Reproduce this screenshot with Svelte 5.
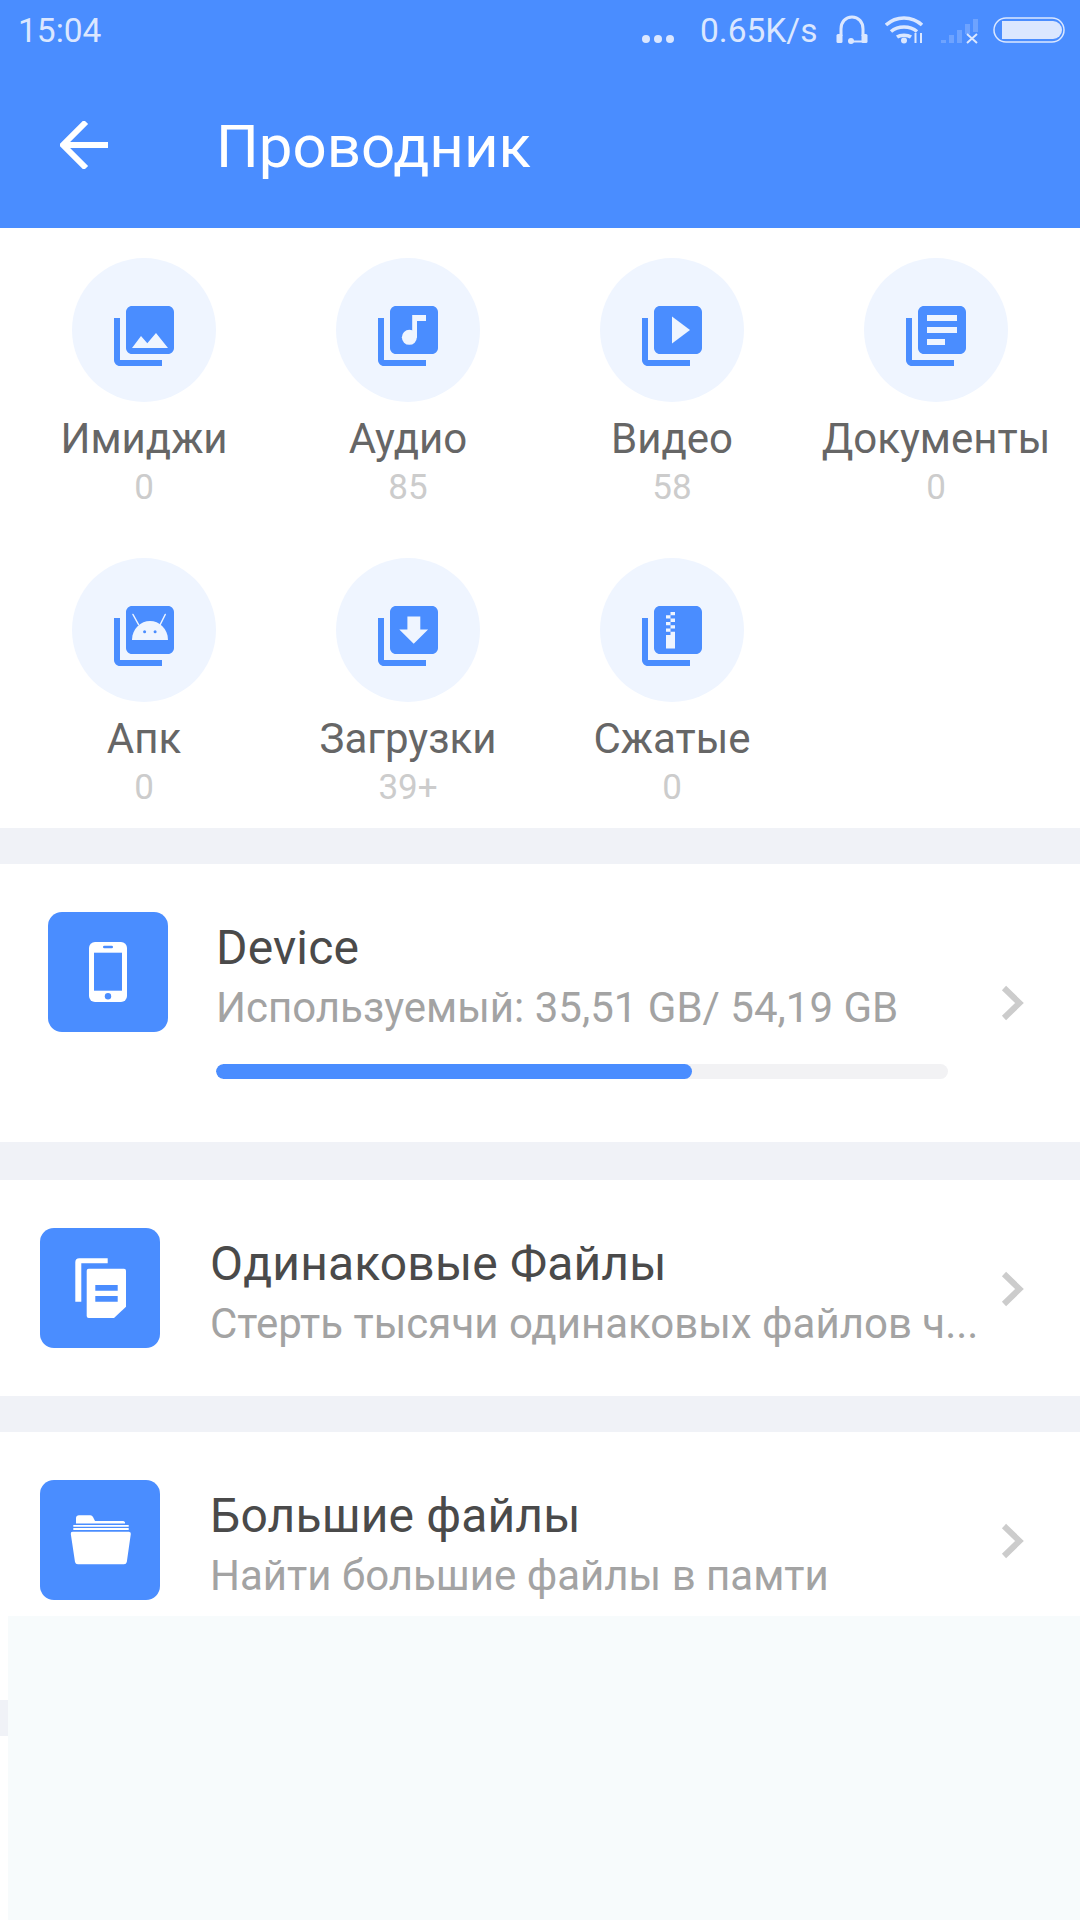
<script>
	const stack = "M22 16V4c0-1.1-.9-2-2-2H8c-1.1 0-2 .9-2 2v12c0 1.1.9 2 2 2h12c1.1 0 2-.9 2-2zM2 6v14c0 1.1.9 2 2 2h14v-2H4V6H2z";

	const categories = [
		{ label: "Имиджи", count: "0", kind: "image" },
		{ label: "Аудио", count: "85", kind: "audio" },
		{ label: "Видео", count: "58", kind: "video" },
		{ label: "Документы", count: "0", kind: "doc" },
		{ label: "Апк", count: "0", kind: "apk" },
		{ label: "Загрузки", count: "39+", kind: "download" },
		{ label: "Сжатые", count: "0", kind: "zip" }
	];
</script>

<div class="page">
	<header class="top">
		<div class="status">
			<span class="time">15:04</span>
			<div class="status-right">
				<svg class="dots" width="34" height="10" viewBox="0 0 34 10" fill="#dbe7ff">
					<circle cx="5" cy="5" r="4" /><circle cx="17" cy="5" r="4" /><circle cx="29" cy="5" r="4" />
				</svg>
				<span class="speed">0.65K/s</span>
				<svg class="headset" width="32" height="30" viewBox="0 0 32 30" fill="none">
					<path d="M5 21V14C5 7 9.500 2 16 2S27 7 27 14V21" stroke="#dbe7ff" stroke-width="3" />
					<rect x="0.500" y="19" width="6" height="9" rx="1.500" fill="#dbe7ff" />
					<rect x="25.500" y="19" width="6" height="9" rx="1.500" fill="#dbe7ff" />
					<circle cx="15" cy="26" r="3" fill="#dbe7ff" />
					<path d="M15 26.500H27" stroke="#dbe7ff" stroke-width="2" />
				</svg>
				<svg class="wifi" width="40" height="28" viewBox="0 0 40 28" fill="none" stroke="#dbe7ff" stroke-width="3.500">
					<path d="M1 9C11 -0.500 27 -0.500 37 9" />
					<path d="M6 15.500C13 9.500 25 9.500 32 15.500" />
					<path d="M12 21C15.500 18.500 22.500 18.500 26 21" />
					<circle cx="19" cy="24.500" r="3" fill="#dbe7ff" stroke="none" />
					<path d="M30.500 17V27M36 17V27" stroke-width="2" />
				</svg>
				<svg class="signal" width="38" height="26" viewBox="0 0 38 26">
					<g fill="#dbe7ff" opacity="0.25">
						<rect x="0" y="22" width="5" height="3" />
						<rect x="8" y="17" width="5" height="8" />
						<rect x="16" y="12" width="5" height="13" />
						<rect x="24" y="6" width="5" height="10" />
						<rect x="32" y="1" width="5" height="13" />
					</g>
					<path d="M26 16L36 25M36 16L26 25" stroke="#dbe7ff" stroke-width="2" />
				</svg>
				<svg class="battery" width="72" height="26" viewBox="0 0 72 26">
					<rect x="1" y="1" width="70" height="24" rx="12" fill="none" stroke="#dbe7ff" stroke-width="1.500" />
					<path d="M9 4H60A9 9 0 0 1 69 13A9 9 0 0 1 60 22H9Z" fill="#dbe7ff" />
				</svg>
			</div>
		</div>
		<div class="toolbar">
			<svg class="back" width="48" height="48" viewBox="0 0 48 48" fill="none" stroke="#fff" stroke-width="6">
				<path d="M2 24H48M26 1L3 24L26 47" />
			</svg>
			<h1>Проводник</h1>
		</div>
	</header>

	<section class="grid">
		{#each categories as cat}
			<div class="cat">
				<div class="circle">
					<svg width="72" height="72" viewBox="0 0 24 24">
						<path d={stack} fill="#4a8dff" />
						{#if cat.kind === "image"}
							<path d="M8 16L11 12L13.100 14.400L16 11L20 16Z" fill="#eff5ff" />
						{:else if cat.kind === "audio"}
							<path d="M13.400 5H18V7H15V12.500H13.400Z" fill="#eff5ff" />
							<circle cx="12.450" cy="12.450" r="2.500" fill="#eff5ff" />
						{:else if cat.kind === "video"}
							<path d="M12 5.500V14.500L18 10Z" fill="#eff5ff" />
						{:else if cat.kind === "doc"}
							<path d="M9 5H19V7H9ZM9 9H19V11H9ZM9 13H15V15H9Z" fill="#eff5ff" />
						{:else if cat.kind === "apk"}
							<path d="M8 13.300C8 9.500 11 7 14 7C17 7 20 9.500 20 13.300Z" fill="#eff5ff" />
							<path d="M8.300 4.800L10.200 8.200M19.100 4.800L17.400 8.200" stroke="#eff5ff" stroke-width="0.450" stroke-linecap="round" />
							<circle cx="12.200" cy="10.600" r="0.500" fill="#4a8dff" />
							<circle cx="15.700" cy="10.600" r="0.500" fill="#4a8dff" />
						{:else if cat.kind === "download"}
							<path d="M11.800 5.500H16.100V9.800H18.700L13.900 14.600L9.100 9.800H11.800Z" fill="#eff5ff" />
						{:else if cat.kind === "zip"}
							<path d="M11.500 4H13V5.100H11.500ZM10 5.100H11.500V6.200H10ZM11.500 6.200H13V7.300H11.500ZM10 7.300H11.500V8.400H10ZM11.500 8.400H13V9.500H11.500ZM10 9.500H11.500V10.600H10ZM11.500 10.600H13V16.200H10V11.700H11.500Z" fill="#eff5ff" />
						{/if}
					</svg>
				</div>
				<div class="cat-label">{cat.label}</div>
				<div class="cat-count">{cat.count}</div>
			</div>
		{/each}
	</section>

	<section class="card device">
		<div class="tile">
			<svg width="120" height="120" viewBox="0 0 120 120">
				<rect x="41" y="30" width="38" height="60" rx="6" fill="#fff" />
				<rect x="46" y="40.700" width="28" height="38" fill="#4a8dff" />
				<rect x="55" y="33.700" width="10" height="2.600" rx="1.300" fill="#4a8dff" />
				<circle cx="60" cy="84.300" r="3.200" fill="#4a8dff" />
			</svg>
		</div>
		<div class="info">
			<div class="title">Device</div>
			<div class="sub">Используемый: 35,51 GB/ 54,19 GB</div>
			<div class="bar"><div class="bar-fill" style="width: {65}%"></div></div>
		</div>
		<svg class="chevron" width="28" height="38" viewBox="0 0 28 38" fill="none" stroke="#ccc" stroke-width="6">
			<path d="M5 4L20.500 19L5 34" />
		</svg>
	</section>

	<section class="card row">
		<div class="tile">
			<svg width="120" height="120" viewBox="0 0 120 120">
				<path d="M67.700 30.300H39.300A4 4 0 0 0 35.300 34.300V73.700H41.300V35.300H67.700Z" fill="#fff" />
				<path d="M48.700 40.700H84A2 2 0 0 1 86 42.700V78.700L74 90H48.700A2 2 0 0 1 46.700 88V42.700A2 2 0 0 1 48.700 40.700Z" fill="#fff" />
				<path d="M55.300 57H77.700V62.700H55.300ZM55.300 68H77.700V73.700H55.300Z" fill="#4a8dff" />
			</svg>
		</div>
		<div class="info">
			<div class="title">Одинаковые Файлы</div>
			<div class="sub">Стерть тысячи одинаковых файлов ч...</div>
		</div>
		<svg class="chevron" width="28" height="38" viewBox="0 0 28 38" fill="none" stroke="#ccc" stroke-width="6">
			<path d="M5 4L20.500 19L5 34" />
		</svg>
	</section>

	<section class="card row last">
		<div class="tile">
			<svg width="120" height="120" viewBox="0 0 120 120">
				<path d="M36 41V38A3 3 0 0 1 39 35.300H50A3 3 0 0 1 53 37L55 41H83A2 2 0 0 1 85 43.500H36Z" fill="#fff" />
				<path d="M33.300 45H88.700V46.700H33.300ZM33.300 48H88.700V50H33.300Z" fill="#fff" />
				<path d="M32.700 51.700H89A2 2 0 0 1 90.800 54L86.800 82A3 3 0 0 1 84 84.300H38A3 3 0 0 1 35 82L30.800 54A2 2 0 0 1 32.700 51.700Z" fill="#fff" />
			</svg>
		</div>
		<div class="info">
			<div class="title">Большие файлы</div>
			<div class="sub">Найти большие файлы в памти</div>
		</div>
		<svg class="chevron" width="28" height="38" viewBox="0 0 28 38" fill="none" stroke="#ccc" stroke-width="6">
			<path d="M5 4L20.500 19L5 34" />
		</svg>
	</section>

	<div class="sheet"></div>
</div>

<style>
	:global(body) {
		margin: 0;
		background: #fff;
	}

	.page {
		position: relative;
		width: 1080px;
		height: 1920px;
		overflow: hidden;
		background: #fff;
		font-family: Roboto, "Noto Sans", sans-serif;
	}

	.top {
		height: 228px;
		background: #4a8dff;
		color: #fff;
	}

	.status {
		display: flex;
		justify-content: space-between;
		height: 60px;
		padding: 0 15px 0 18px;
		color: #dbe7ff;
		font-size: 33.500px;
	}

	.time {
		line-height: 62px;
	}

	.status-right {
		display: flex;
		align-items: flex-start;
	}

	.dots {
		margin: 34px 0 0;
	}

	.speed {
		margin-left: 25px;
		width: 119px;
		line-height: 62px;
		white-space: nowrap;
	}

	.headset {
		margin: 15px 0 0 17px;
	}

	.wifi {
		margin: 16px 0 0 17px;
	}

	.signal {
		margin: 18px 0 0 16px;
	}

	.battery {
		margin: 17px 0 0 14px;
	}

	.toolbar {
		display: flex;
		align-items: center;
		height: 168px;
		padding: 4px 0 0 60px;
		box-sizing: border-box;
	}

	.back {
		margin-top: -2px;
	}

	h1 {
		margin: 2px 0 0 108px;
		font-size: 60px;
		font-weight: 400;
		line-height: 1;
	}

	.grid {
		display: grid;
		grid-template-columns: repeat(4, 264px);
		grid-auto-rows: 300px;
		height: 570px;
		padding: 30px 0 0 12px;
		border-bottom: 36px solid #f0f2f7;
	}

	.cat {
		display: flex;
		flex-direction: column;
		align-items: center;
	}

	.circle {
		display: flex;
		justify-content: center;
		width: 144px;
		height: 144px;
		padding-top: 42px;
		box-sizing: border-box;
		border-radius: 50%;
		background: #eff5ff;
	}

	.cat-label {
		margin-top: 12px;
		font-size: 42px;
		line-height: 50px;
		color: #666;
		white-space: nowrap;
	}

	.cat-count {
		margin-top: 4px;
		font-size: 35px;
		line-height: 40px;
		color: #ccc;
	}

	.card {
		display: flex;
		box-sizing: border-box;
		position: relative;
		border-bottom: 36px solid #f0f2f7;
	}

	.device {
		height: 316px;
		padding: 48px 0 0 48px;
		border-bottom-width: 38px;
	}

	.row {
		height: 252px;
		padding: 48px 0 0 40px;
	}

	.row.last {
		height: 304px;
	}

	.tile {
		flex: none;
		width: 120px;
		height: 120px;
		border-radius: 14px;
		background: #4a8dff;
	}

	.tile svg {
		display: block;
	}

	.info {
		margin-left: 48px;
		padding-top: 8px;
		width: 732px;
	}

	.row .info {
		margin-left: 50px;
		width: 768px;
	}

	.title {
		font-size: 48px;
		line-height: 56px;
		letter-spacing: 0.150px;
		color: #4a4a4a;
		white-space: nowrap;
	}

	.sub {
		margin-top: 7px;
		font-size: 42px;
		line-height: 50px;
		color: #a3a3a3;
		white-space: nowrap;
	}

	.bar {
		margin-top: 31px;
		height: 15px;
		border-radius: 8px;
		background: #f2f2f4;
		overflow: hidden;
	}

	.bar-fill {
		height: 100%;
		border-radius: 8px;
		background: #4a8dff;
	}

	.chevron {
		position: absolute;
		left: 999px;
		top: 120px;
	}

	.row .chevron {
		top: 90px;
	}

	.sheet {
		position: absolute;
		left: 8px;
		right: 0;
		top: 1616px;
		bottom: 0;
		background: #f7fbfc;
	}
</style>
